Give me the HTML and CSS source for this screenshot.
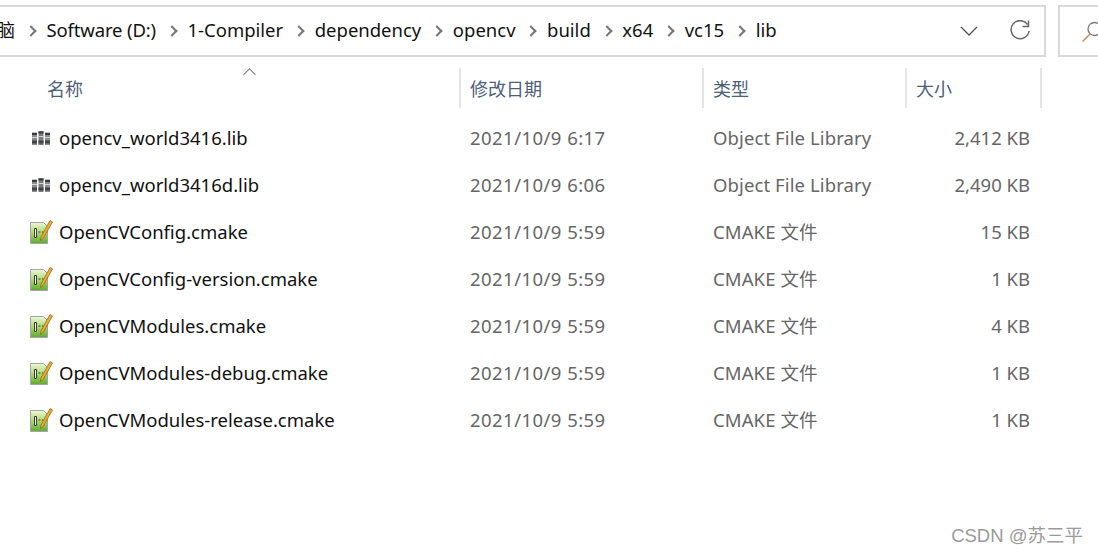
FILE: index.html
```html
<!DOCTYPE html>
<html lang="zh">

<head>
    <meta charset="UTF-8">
    <title>lib</title>
    <link rel="stylesheet" href="styles.css">
</head>

<body>
<svg class="icon-defs" width="0" height="0">
    <defs>
        <linearGradient id="cmake-green" x1="0" y1="0" x2="0" y2="1">
            <stop offset="0" stop-color="#eef7d8"/>
            <stop offset=".55" stop-color="#a2d660"/>
            <stop offset="1" stop-color="#5fa832"/>
        </linearGradient>
    </defs>
    <symbol id="icon-lib" viewBox="0 0 20 16">
        <rect x="1" y="2.500" width="5" height="12.500" fill="#8a8c8e"/>
        <rect x="7.500" y="1" width="5" height="14" fill="#7a7c7e"/>
        <rect x="14" y="2.500" width="5" height="12.500" fill="#8a8c8e"/>
        <path d="M1 4h5M7.500 2.500h5M14 4h5" stroke="#3a3a3a" stroke-width="2"/>
        <path d="M1 12h5M7.500 12h5M14 12h5" stroke="#444" stroke-width="3"/>
        <path d="M1 7.500h5M7.500 6.500h5M14 7.500h5" stroke="#d5d5d5" stroke-width="1"/>
    </symbol>
    <symbol id="icon-cmake" viewBox="0 0 24 26">
        <path d="M1.500 3.500h13l4 4v17h-17z" fill="url(#cmake-green)" stroke="#a5a5a5"/>
        <path d="M5.500 9.500v9h2v-9z" fill="#fff" stroke="#3a3a3a"/>
        <path d="M9.500 13h2M13 13h1.500" stroke="#3a3a3a" stroke-width="1.200"/>
        <path d="M21 1.500 12 18l-.5 3.500 2.800-2.300L23.500 3z" fill="#efae32" stroke="#8a5a14" stroke-width=".7"/>
    </symbol>
</svg>

<!-- address bar and search box -->
<header class="toolbar">
    <div class="address">
        <nav class="crumbs">
            <span class="crumb-cut">脑</span>
            <span class="sep"></span><span class="crumb-drive">Software (D:)</span>
            <span class="sep"></span><span>1-Compiler</span>
            <span class="sep"></span><span>dependency</span>
            <span class="sep"></span><span>opencv</span>
            <span class="sep"></span><span>build</span>
            <span class="sep"></span><span>x64</span>
            <span class="sep"></span><span>vc15</span>
            <span class="sep"></span><span>lib</span>
        </nav>
        <svg class="chevron" width="18" height="10" viewBox="0 0 18 10">
            <path d="M1 1l8 8 8-8" fill="none" stroke="#555" stroke-width="1.300"/>
        </svg>
        <svg class="refresh" width="22" height="22" viewBox="0 0 22 22">
            <path d="M18.500 4.500A9 9 0 1 0 20 11" fill="none" stroke="#666" stroke-width="1.500"/>
            <path d="M13.500 6.500h6v-6" fill="none" stroke="#666" stroke-width="1.500"/>
        </svg>
    </div>
    <div class="search">
        <svg width="22" height="22" viewBox="0 0 22 22">
            <circle cx="13.500" cy="8" r="6.500" fill="none" stroke="#777" stroke-width="1.300"/>
            <path d="M9 13l-7.500 7.500" stroke="#c98a4a" stroke-width="1.500"/>
        </svg>
    </div>
</header>

<!-- file list -->
<main class="files">
    <div class="columns">
        <div class="col col-name">名称<span class="sort-arrow"></span></div>
        <div class="col col-date">修改日期</div>
        <div class="col col-type">类型</div>
        <div class="col col-size">大小</div>
    </div>

    <div class="row">
        <div class="cell-name"><svg class="lib-icon"><use href="#icon-lib"/></svg>opencv_world3416.lib</div>
        <div class="cell-date">2021/10/9 6:17</div>
        <div class="cell-type">Object File Library</div>
        <div class="cell-size">2,412 KB</div>
    </div>
    <div class="row">
        <div class="cell-name"><svg class="lib-icon"><use href="#icon-lib"/></svg>opencv_world3416d.lib</div>
        <div class="cell-date">2021/10/9 6:06</div>
        <div class="cell-type">Object File Library</div>
        <div class="cell-size">2,490 KB</div>
    </div>
    <div class="row">
        <div class="cell-name"><svg class="cmake-icon"><use href="#icon-cmake"/></svg>OpenCVConfig.cmake</div>
        <div class="cell-date">2021/10/9 5:59</div>
        <div class="cell-type">CMAKE 文件</div>
        <div class="cell-size">15 KB</div>
    </div>
    <div class="row">
        <div class="cell-name"><svg class="cmake-icon"><use href="#icon-cmake"/></svg>OpenCVConfig-version.cmake</div>
        <div class="cell-date">2021/10/9 5:59</div>
        <div class="cell-type">CMAKE 文件</div>
        <div class="cell-size">1 KB</div>
    </div>
    <div class="row">
        <div class="cell-name"><svg class="cmake-icon"><use href="#icon-cmake"/></svg>OpenCVModules.cmake</div>
        <div class="cell-date">2021/10/9 5:59</div>
        <div class="cell-type">CMAKE 文件</div>
        <div class="cell-size">4 KB</div>
    </div>
    <div class="row">
        <div class="cell-name"><svg class="cmake-icon"><use href="#icon-cmake"/></svg>OpenCVModules-debug.cmake</div>
        <div class="cell-date">2021/10/9 5:59</div>
        <div class="cell-type">CMAKE 文件</div>
        <div class="cell-size">1 KB</div>
    </div>
    <div class="row">
        <div class="cell-name"><svg class="cmake-icon"><use href="#icon-cmake"/></svg>OpenCVModules-release.cmake</div>
        <div class="cell-date">2021/10/9 5:59</div>
        <div class="cell-type">CMAKE 文件</div>
        <div class="cell-size">1 KB</div>
    </div>
</main>

<div class="watermark">CSDN @苏三平</div>
</body>

</html>
```
FILE: styles.css
```css
html, body {
    height: 100%;
}

body {
    margin: 0;
    overflow: hidden;
    background-color: white;
    color: #111;
    font-family: "Noto Sans", "Noto Sans CJK SC", sans-serif;
    font-size: 18.5px;
}

.icon-defs {
    position: absolute;
}

/* toolbar */
.toolbar {
    display: flex;
    gap: 12px;
    padding-top: 5px;
    height: 52px;
}

.address {
    flex-shrink: 0;
    width: 1046px;
    height: 52px;
    box-sizing: border-box;
    display: flex;
    align-items: center;
    border: 2px solid #d9d9d9;
    border-left: none;
}

.crumbs {
    flex: 1;
    display: flex;
    align-items: center;
    padding-bottom: 4px;
    white-space: nowrap;
    overflow: hidden;
}

.crumb-cut {
    width: 15px;
    overflow: hidden;
    direction: rtl;
}

.crumb-drive {
    letter-spacing: -.15px;
}

.sep {
    width: 31.5px;
    display: flex;
    justify-content: center;
}

.sep::before {
    content: "";
    width: 6px;
    height: 6px;
    margin-top: 3px;
    border-top: 2px solid #777;
    border-right: 2px solid #777;
    transform: rotate(45deg);
}

.chevron {
    margin-right: 31px;
}

.refresh {
    margin-right: 13px;
}

.search {
    flex: 1;
    height: 52px;
    box-sizing: border-box;
    padding: 14px 0 0 21px;
    border: 2px solid #d9d9d9;
    border-right: none;
}

/* file list */
.columns {
    display: flex;
    height: 40px;
    margin-top: 11px;
    font-size: 18px;
    color: #4c607a;
}

.col {
    position: relative;
    box-sizing: border-box;
    display: flex;
    align-items: center;
    border-right: 2px solid #e5e5e5;
}

.col-name {
    width: 461px;
    padding-left: 47px;
}

.col-date {
    width: 243px;
    padding-left: 9px;
}

.col-type {
    width: 203px;
    padding-left: 9px;
}

.col-size {
    width: 135px;
    padding-left: 9px;
}

.sort-arrow {
    position: absolute;
    left: 245px;
    top: 2px;
    width: 8px;
    height: 8px;
    border-left: 1px solid #777;
    border-top: 1px solid #777;
    transform: rotate(45deg);
}

.row {
    display: flex;
    align-items: center;
    height: 47px;
    line-height: 26px;
}

.columns + .row {
    margin-top: 6px;
}

.cell-name {
    width: 461px;
    display: flex;
    align-items: center;
    padding-left: 29px;
    box-sizing: border-box;
}

.lib-icon {
    width: 20px;
    height: 16px;
    margin: 0 8px 0 2px;
}

.cmake-icon {
    width: 24px;
    height: 26px;
    margin-right: 6px;
}

.cell-date {
    width: 243px;
    padding-left: 9px;
    box-sizing: border-box;
    letter-spacing: .45px;
    color: #666;
}

.cell-type {
    width: 203px;
    padding-left: 9px;
    box-sizing: border-box;
    letter-spacing: .1px;
    color: #666;
}

.cell-size {
    width: 123px;
    text-align: right;
    color: #666;
}

.watermark {
    position: absolute;
    right: 15px;
    bottom: 7px;
    color: #9a9a9a;
    font-family: "Liberation Sans", "Noto Sans CJK SC", sans-serif;
    font-size: 18.5px;
}
```
